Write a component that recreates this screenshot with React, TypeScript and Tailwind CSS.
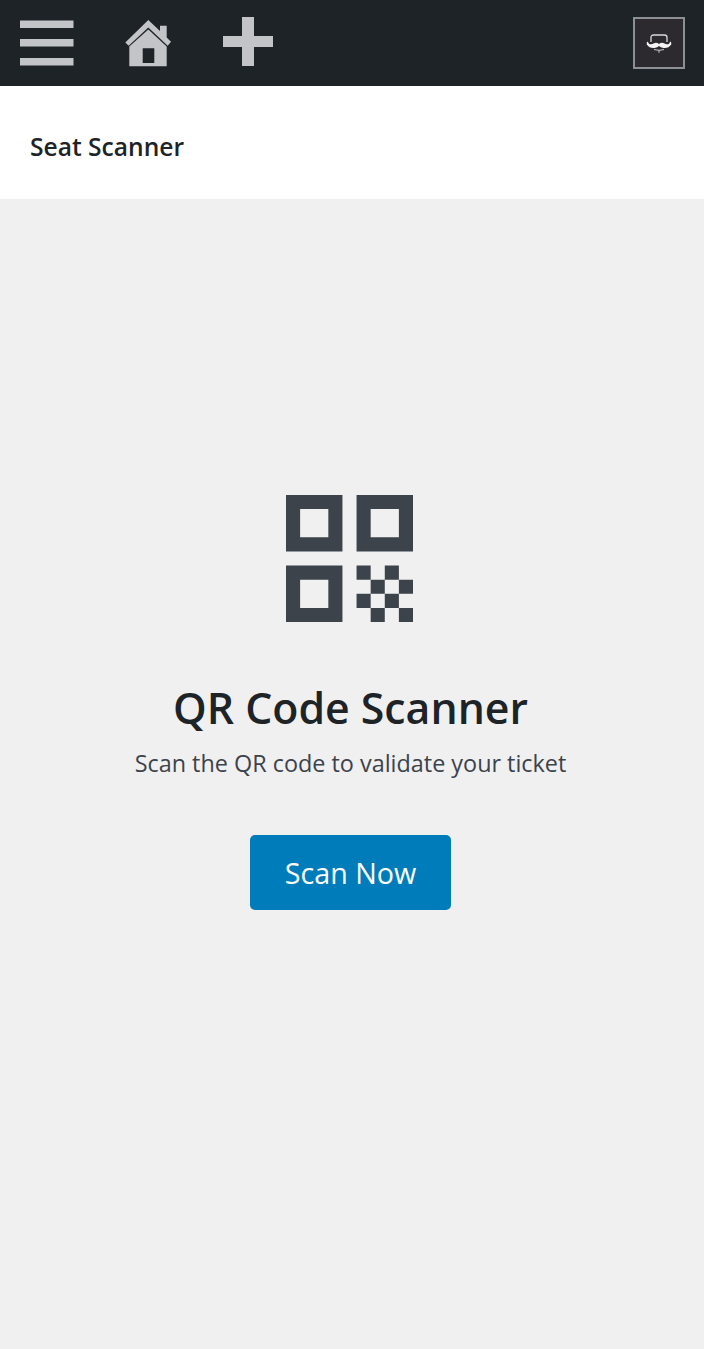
import React from 'react';

const MenuIcon = () => (
  <svg width="54" height="46" viewBox="0 0 54 46" fill="#c3c4c7" className="block">
    <rect x="0" y="0.5" width="53.5" height="7.5" />
    <rect x="0" y="19" width="53.5" height="7.5" />
    <rect x="0" y="38" width="53.5" height="7.5" />
  </svg>
);

const HomeIcon = () => (
  <svg width="46" height="47" viewBox="0 0 46 47" fill="#c3c4c7" className="block">
    <path d="M23.3 0 L0.3 22.5 L3.7 25.7 L23.3 7.5 L42.7 25.7 L46 21.7 L41.7 17.5 V5.7 H35 V11 Z" />
    <path fillRule="evenodd" d="M4.3 26.5 L23.3 9.5 L41.7 26.5 V46.3 H4.3 Z M17.7 28.3 V43 H29.3 V28.3 Z" />
  </svg>
);

const PlusIcon = () => (
  <svg width="50" height="49" viewBox="0 0 50 49" fill="#c3c4c7" className="block">
    <path d="M19 0 H31 V19 H50 V30 H31 V49 H19 V30 H0 V19 H19 Z" />
  </svg>
);

const MustacheIcon = () => (
  <svg width="26" height="19" viewBox="0 0 26 19" className="block">
    <path d="M5 8 V3.5 Q5 1 7.5 1 H18.5 Q21 1 21 3.5 V8" fill="none" stroke="#d8d8db" strokeWidth="1.3" />
    <path d="M8 15.5 Q13 17 18 15.5 M13 16 V18.8" fill="none" stroke="#c4c4c8" strokeWidth="1.1" />
    <path d="M13 10 Q10.5 8 8 9.2 Q5.5 11 3.2 10 L1.6 7.5 Q0.2 8.5 0.8 10.5 Q3.5 14.5 8.5 14 Q11.5 13.5 13 12 Q14.5 13.5 17.5 14 Q22.5 14.5 25.2 10.5 Q25.8 8.5 24.4 7.5 L22.8 10 Q20.5 11 18 9.2 Q15.5 8 13 10 Z" fill="#f4f4f5" />
  </svg>
);

const QrIcon = () => (
  <svg width="127" height="127" viewBox="0 0 9 9" fill="#3c434a" className="block">
    <path
      fillRule="evenodd"
      d="M0 0 H4 V4 H0 Z M1 1 V3 H3 V1 Z M5 0 H9 V4 H5 Z M6 1 V3 H8 V1 Z M0 5 H4 V9 H0 Z M1 6 V8 H3 V6 Z"
    />
    <path d="M5 5 H6 V6 H5 Z M7 5 H8 V6 H7 Z M6 6 H7 V7 H6 Z M8 6 H9 V7 H8 Z M5 7 H6 V8 H5 Z M7 7 H8 V8 H7 Z M6 8 H7 V9 H6 Z M8 8 H9 V9 H8 Z" />
  </svg>
);

export default function App() {
  return (
    <div className="flex min-h-[1349px] flex-col bg-[#f0f0f1] font-['Open_Sans','Noto_Sans',sans-serif]">
      <header className="flex h-[86px] items-center bg-[#1d2327] pl-5 pr-[19px]">
        <MenuIcon />
        <div className="ml-[51px]">
          <HomeIcon />
        </div>
        <div className="ml-[52px] -mt-[3px]">
          <PlusIcon />
        </div>
        <button className="ml-auto flex h-[52px] w-[52px] items-center justify-center border-2 border-[#8c8f94] bg-[#2c2a2e]">
          <MustacheIcon />
        </button>
      </header>

      <div className="flex h-[113px] items-center bg-white pl-[30px]">
        <h1 className="mt-[10px] text-[24.6px] font-semibold text-[#1d2327]">Seat Scanner</h1>
      </div>

      <main className="flex flex-col items-center pt-[296px] pr-[3px]">
        <div className="mr-[3px]">
          <QrIcon />
        </div>
        <h2 className="mt-[52px] text-[42.8px] leading-[68px] font-semibold text-[#1d2327]">QR Code Scanner</h2>
        <p className="mt-[5px] text-[23.4px] leading-[32px] text-[#3c434a]">Scan the QR code to validate your ticket</p>
        <button className="mt-[56px] flex h-[75px] w-[201px] items-center justify-center rounded-[5px] bg-[#007cba] text-[28.7px] text-white">
          Scan Now
        </button>
      </main>
    </div>
  );
}
